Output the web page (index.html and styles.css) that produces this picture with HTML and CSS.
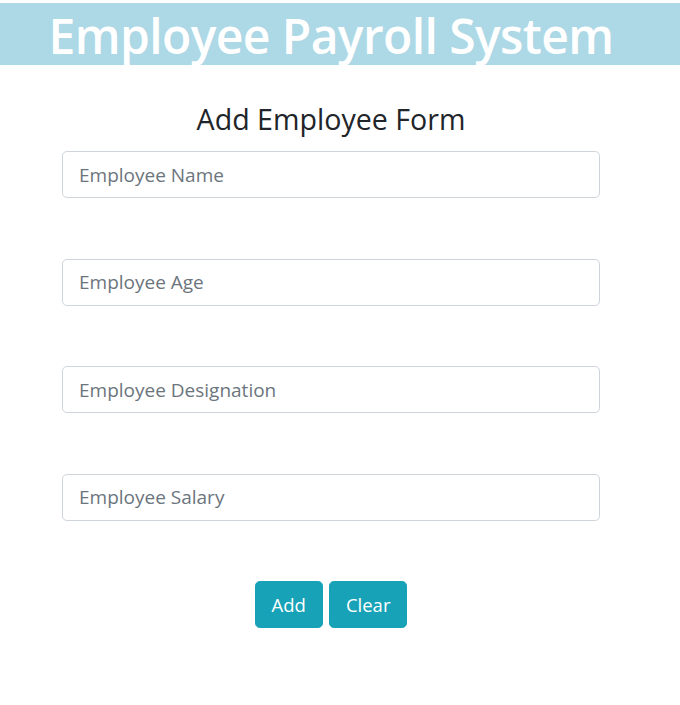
FILE: index.html
```html
<!DOCTYPE html>
<html lang="en">
<head>
<meta charset="utf-8">
<title>Employee Payroll System</title>
<link rel="stylesheet" href="styles.css">
</head>
<body>
<header class="banner">
  <div class="banner-inner"><h1 class="banner-title">Employee Payroll System</h1></div>
</header>
<main class="page">
  <h3 class="form-title">Add Employee Form</h3>
  <form class="emp-form">
    <input class="field" type="text" placeholder="Employee Name">
    <input class="field" type="text" placeholder="Employee Age">
    <input class="field" type="text" placeholder="Employee Designation">
    <input class="field" type="text" placeholder="Employee Salary">
    <div class="actions">
      <button type="button" class="btn">Add</button>
      <button type="button" class="btn">Clear</button>
    </div>
  </form>
</main>
</body>
</html>
```
FILE: styles.css
```css
* { box-sizing: border-box; }
html, body { margin: 0; padding: 0; background: #fff; }
body {
  font-family: "Open Sans", "Noto Sans", "DejaVu Sans", sans-serif;
  color: #212529;
  padding-top: 3px;
}
.banner {
  background: #add8e6;
  height: 62px;
}
.banner-inner {
  width: 662px;
  height: 100%;
  padding-top: 4px;
  display: flex;
  align-items: center;
  justify-content: center;
}
.banner-title {
  margin: 0;
  color: #fff;
  font-size: 48px;
  font-weight: 600;
  line-height: 1;
  letter-spacing: -0.6px;
  white-space: nowrap;
}
.page {
  width: 662px;
  display: flex;
  flex-direction: column;
  align-items: center;
}
.form-title {
  margin: 36px 0 0;
  font-size: 28.6px;
  font-weight: 400;
  line-height: 36px;
  height: 36px;
}
.emp-form {
  margin-top: 14px;
  width: 538px;
  display: flex;
  flex-direction: column;
  gap: 60.5px;
}
.field {
  display: block;
  width: 100%;
  height: 47px;
  padding: 0 16px;
  font-family: inherit;
  font-size: 19px;
  color: #495057;
  background: #fff;
  border: 1px solid #ced4da;
  border-radius: 4.8px;
  outline: none;
}
.field::placeholder { color: #6c757d; opacity: 1; }
.actions {
  display: flex;
  justify-content: center;
  gap: 6px;
}
.btn {
  height: 47px;
  padding: 0 16px;
  font-family: inherit;
  font-size: 18.5px;
  color: #fff;
  background: #17a2b8;
  border: 1px solid #17a2b8;
  border-radius: 4.8px;
  cursor: pointer;
}
```
